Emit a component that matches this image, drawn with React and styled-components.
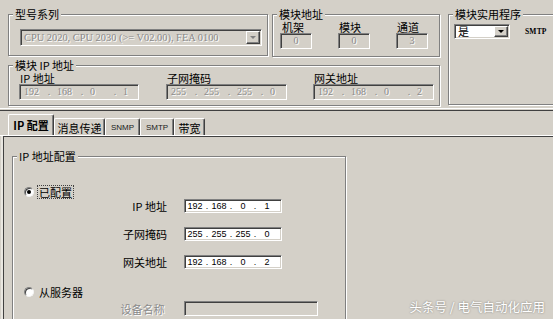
import React from 'react';
import styled, { createGlobalStyle } from 'styled-components';

const GlobalStyle = createGlobalStyle`
	body {
		margin: 0;
		background: #d4d0c8;
	}
`;

const Screen = styled.div`
	position: relative;
	width: 553px;
	height: 319px;
	overflow: hidden;
	background: #d4d0c8;
	color: #000;
	font-family: 'Noto Sans CJK SC', 'Liberation Sans', sans-serif;
	font-size: 11px;
	line-height: 12px;
`;

const TopArea = styled.div`
	display: grid;
	grid-template-columns: 432px 120px;
	column-gap: 8px;
	padding: 8px 0 0 8px;
`;

const LeftColumn = styled.div`
	display: flex;
	flex-direction: column;
	gap: 2px;
`;

const TopRow = styled.div`
	display: flex;
	gap: 4px;
`;

const Group = styled.fieldset`
	box-sizing: border-box;
	width: ${(p) => p.$w}px;
	height: ${(p) => p.$h}px;
	margin: 0;
	padding: 0 0 0 4px;
	min-width: 0;
	border: 1px solid #808080;
	box-shadow: inset 1px 1px 0 #fff, 1px 1px 0 #fff;
`;

const Caption = styled.legend`
	padding: 0 2px;
	height: 12px;
	line-height: 12px;
	background: #d4d0c8;
	white-space: pre;
`;

const Combo = styled.div`
	box-sizing: border-box;
	display: flex;
	align-items: center;
	width: ${(p) => p.$w}px;
	height: ${(p) => p.$h}px;
	margin: ${(p) => p.$m || '0'};
	padding: 1px;
	background: ${(p) => (p.$disabled ? '#d4d0c8' : '#fff')};
	border: 1px solid;
	border-color: #808080 #fff #fff #808080;
	box-shadow: inset 1px 1px 0 #404040, inset -1px -1px 0 #d4d0c8;
`;

const ComboText = styled.span`
	flex: 1;
	padding-left: 2px;
	white-space: pre;
	line-height: 11px;
	color: ${(p) => (p.$disabled ? '#8a8a8a' : '#000')};
	text-shadow: ${(p) => (p.$disabled ? '1px 1px 0 #fff' : 'none')};
	font-family: ${(p) => (p.$disabled ? "'Liberation Serif', serif" : 'inherit')};
	font-size: ${(p) => (p.$disabled ? '10.4px' : '11px')};
`;

const DropButton = styled.span`
	box-sizing: border-box;
	display: flex;
	align-items: center;
	justify-content: center;
	flex: none;
	width: 14px;
	height: 100%;
	background: #d4d0c8;
	border: 1px solid;
	border-color: #fff #404040 #404040 #fff;
	box-shadow: inset -1px -1px 0 #808080;
`;

const Arrow = styled.span`
	width: 0;
	height: 0;
	border-left: 3px solid transparent;
	border-right: 3px solid transparent;
	border-top: 3px solid ${(p) => (p.$disabled ? '#808080' : '#000')};
`;

const SubLabel = styled.div`
	height: 13px;
	line-height: 14px;
	padding-left: ${(p) => p.$pl || 1}px;
	white-space: pre;
`;

const AddrGrid = styled.div`
	display: grid;
	grid-template-columns: repeat(3, 32px);
	column-gap: 26px;
	padding-left: 3px;
`;

const Sunken = styled.div`
	box-sizing: border-box;
	display: flex;
	align-items: center;
	width: ${(p) => p.$w}px;
	height: ${(p) => p.$h}px;
	background: ${(p) => (p.$disabled ? '#d4d0c8' : '#fff')};
	border: 1px solid;
	border-color: #808080 #fff #fff #808080;
	box-shadow: inset 1px 1px 0 #404040, inset -1px -1px 0 #d4d0c8;
`;

const GrayValue = styled.span`
	flex: 1;
	text-align: center;
	color: #8a8a8a;
	text-shadow: 1px 1px 0 #fff;
	font-family: 'Liberation Serif', serif;
	font-size: 10px;
`;

const IpGrid = styled.div`
	display: grid;
	grid-template-columns: 120px 120px 120px;
	column-gap: 27px;
	padding-left: 6px;
`;

const Seg = styled.span`
	width: ${(p) => p.$w}px;
	text-align: ${(p) => (p.$disabled ? 'left' : 'center')};
	padding-left: ${(p) => (p.$disabled ? 4 : 0)}px;
	box-sizing: border-box;
	flex: none;
	font-family: ${(p) => (p.$disabled ? "'Liberation Serif', serif" : "'Liberation Sans', sans-serif")};
	font-size: ${(p) => (p.$disabled ? 10 : 9)}px;
	color: ${(p) => (p.$disabled ? '#8a8a8a' : '#000')};
	text-shadow: ${(p) => (p.$disabled ? '1px 1px 0 #fff' : 'none')};
`;

const Dot = styled(Seg)`
	padding-left: 0;
	text-align: center;
`;

const UtilRow = styled.div`
	display: flex;
	align-items: center;
	gap: 15px;
	padding-left: 1px;
	margin-top: 4px;
`;

const SmtpText = styled.span`
	font-family: 'Liberation Serif', serif;
	font-weight: bold;
	font-size: 7.5px;
	letter-spacing: 0.2px;
`;

const Separator = styled.div`
	margin-top: 2px;
	height: 1px;
	border-top: 1px solid #fff;
	border-bottom: 1px solid #404040;
`;

const TabStrip = styled.div`
	display: flex;
	align-items: flex-end;
	height: 24px;
	padding-left: 8px;
	border-bottom: 1px solid #fff;
`;

const Tab = styled.div`
	box-sizing: border-box;
	display: flex;
	align-items: center;
	justify-content: center;
	width: ${(p) => p.$w}px;
	height: ${(p) => (p.$active ? 21 : 17)}px;
	padding-top: ${(p) => (p.$active ? 0 : 1)}px;
	border: 1px solid;
	border-bottom: none;
	border-color: #fff #404040 transparent #fff;
	border-radius: 2px 2px 0 0;
	box-shadow: inset -1px 0 0 #808080;
	font-weight: ${(p) => (p.$active ? 'bold' : 'normal')};
	white-space: pre;
`;

const TabLatin = styled.span`
	font-family: 'Liberation Sans', sans-serif;
	font-size: 8px;
	color: #202020;
`;

const Panel = styled.div`
	margin-left: 3px;
	height: 200px;
	padding: 13px 0 0 8px;
	border-top: 1px solid #404040;
	border-left: 1px solid #404040;
	box-shadow: -2px 0 0 #e8e6e0;
`;

const RadioRow = styled.div`
	display: flex;
	align-items: center;
	gap: 4px;
	height: 14px;
	margin-top: ${(p) => p.$mt}px;
	padding-left: 7px;
`;

const Radio = styled.span`
	box-sizing: border-box;
	display: flex;
	align-items: center;
	justify-content: center;
	width: 10px;
	height: 10px;
	border-radius: 50%;
	background: #fff;
	border: 1px solid;
	border-color: #808080 #f4f4f4 #f4f4f4 #808080;
	box-shadow: inset 1px 1px 0 #404040;

	&::after {
		content: '';
		width: 4px;
		height: 4px;
		border-radius: 50%;
		background: ${(p) => (p.$checked ? '#000' : 'transparent')};
	}
`;

const RadioLabel = styled.span`
	padding: 0 1px;
	outline: ${(p) => (p.$focus ? '1px dotted #404040' : 'none')};
`;

const FormGrid = styled.div`
	display: grid;
	grid-template-columns: 150px auto;
	column-gap: 17px;
	row-gap: 14px;
	align-items: center;
	margin-top: ${(p) => p.$mt || 0}px;
`;

const RowLabel = styled.span`
	text-align: right;
	white-space: pre;
	color: ${(p) => (p.$disabled ? '#8a8a8a' : '#000')};
	text-shadow: ${(p) => (p.$disabled ? '1px 1px 0 #fff' : 'none')};
`;

const Watermark = styled.div`
	position: absolute;
	right: 8px;
	bottom: 5px;
	font-size: 12.5px;
	line-height: 14px;
	color: #fff;
	text-shadow: 0 0 2px rgba(0, 0, 0, 0.45);
	white-space: pre;
`;

const IpField = ({ values, w, h, disabled, seg, dot }) => (
	<Sunken $w={w} $h={h} $disabled={disabled}>
		{values.map((v, i) => (
			<React.Fragment key={i}>
				{i > 0 && <Dot $w={dot} $disabled={disabled}>.</Dot>}
				<Seg $w={seg} $disabled={disabled}>{v}</Seg>
			</React.Fragment>
		))}
	</Sunken>
);

export default function App() {
	return (
		<Screen>
			<GlobalStyle />
			<TopArea>
				<LeftColumn>
					<TopRow>
						<Group $w={260} $h={48}>
							<Caption>型号系列</Caption>
							<Combo $w={242} $h={17} $m="9px 0 0 7px" $disabled>
								<ComboText $disabled>CPU 2020, CPU 2030 (&gt;= V02.00), FEA 0100</ComboText>
								<DropButton>
									<Arrow $disabled />
								</DropButton>
							</Combo>
						</Group>
						<Group $w={168} $h={49}>
							<Caption>模块地址</Caption>
							<AddrGrid>
								<SubLabel $pl={2}>机架</SubLabel>
								<SubLabel $pl={0}>模块</SubLabel>
								<SubLabel $pl={0}>通道</SubLabel>
								<Sunken $w={32} $h={16} $disabled>
									<GrayValue>0</GrayValue>
								</Sunken>
								<Sunken $w={32} $h={16} $disabled>
									<GrayValue>0</GrayValue>
								</Sunken>
								<Sunken $w={32} $h={16} $disabled>
									<GrayValue>3</GrayValue>
								</Sunken>
							</AddrGrid>
						</Group>
					</TopRow>
					<Group $w={432} $h={47}>
						<Caption>模块 IP 地址</Caption>
						<IpGrid>
							<SubLabel>IP 地址</SubLabel>
							<SubLabel>子网掩码</SubLabel>
							<SubLabel>网关地址</SubLabel>
							<IpField values={['192', '168', '0', '1']} w={120} h={16} seg={25} dot={8} disabled />
							<IpField values={['255', '255', '255', '0']} w={121} h={16} seg={25} dot={8} disabled />
							<IpField values={['192', '168', '0', '2']} w={121} h={16} seg={25} dot={8} disabled />
						</IpGrid>
					</Group>
				</LeftColumn>
				<Group $w={120} $h={97}>
					<Caption>模块实用程序</Caption>
					<UtilRow>
						<Combo $w={56} $h={15}>
							<ComboText>是</ComboText>
							<DropButton>
								<Arrow />
							</DropButton>
						</Combo>
						<SmtpText>SMTP</SmtpText>
					</UtilRow>
				</Group>
			</TopArea>
			<Separator />
			<TabStrip>
				<Tab $w={46} $active>
					<span>IP 配置</span>
				</Tab>
				<Tab $w={51}>消息传递</Tab>
				<Tab $w={35}>
					<TabLatin>SNMP</TabLatin>
				</Tab>
				<Tab $w={34}>
					<TabLatin>SMTP</TabLatin>
				</Tab>
				<Tab $w={31}>带宽</Tab>
			</TabStrip>
			<Panel>
				<Group $w={334} $h={220}>
					<Caption>IP 地址配置</Caption>
					<RadioRow $mt={23}>
						<Radio $checked />
						<RadioLabel $focus>已配置</RadioLabel>
					</RadioRow>
					<FormGrid>
						<RowLabel>IP 地址</RowLabel>
						<IpField values={['192', '168', '0', '1']} w={98} h={14} seg={20} dot={4} />
						<RowLabel>子网掩码</RowLabel>
						<IpField values={['255', '255', '255', '0']} w={98} h={14} seg={20} dot={4} />
						<RowLabel>网关地址</RowLabel>
						<IpField values={['192', '168', '0', '2']} w={98} h={14} seg={20} dot={4} />
					</FormGrid>
					<RadioRow $mt={16}>
						<Radio />
						<RadioLabel>从服务器</RadioLabel>
					</RadioRow>
					<FormGrid $mt={2}>
						<RowLabel $disabled>设备名称 </RowLabel>
						<Sunken $w={134} $h={15} $disabled />
					</FormGrid>
				</Group>
			</Panel>
			<Watermark>头条号 / 电气自动化应用</Watermark>
		</Screen>
	);
}
